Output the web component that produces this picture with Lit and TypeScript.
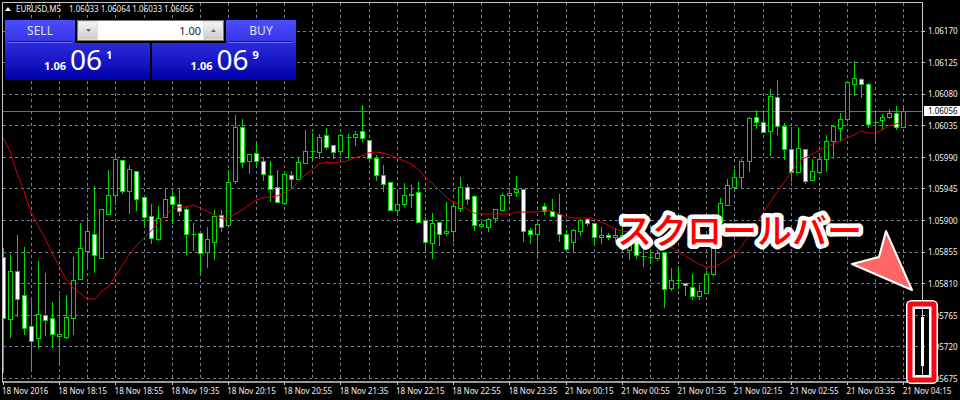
import { LitElement, html, svg, css } from "lit";
import { customElement, state } from "lit/decorators.js";

// Each candle: high, body top, body bottom, low, and f (falling) / r (rising)
const CANDLES = `
248 257 318 372 f|254 271 319 337 r|235 271 299 316 f|247 295 328 334 f|297 326 341 369 f|261 314 338 348 r|273 315 320 335 f|302 318 334 347 f
295 334 336 365 r|295 317 337 338 r|257 280 318 334 r|223 248 279 279 r|217 231 251 266 r|186 234 255 272 f|209 209 258 258 r|170 195 214 214 r
155 159 195 204 r|160 160 191 193 f|165 169 191 213 r|171 171 199 210 f|196 197 217 225 f|204 216 238 243 f|206 218 239 240 r|189 199 217 217 r
191 196 204 223 f|189 204 211 215 f|207 209 234 254 f|223 234 234 250 r|233 233 253 272 f|227 239 252 267 r|210 216 242 259 r|210 215 227 231 f
170 182 225 225 r|115 127 181 183 r|119 127 162 167 f|154 154 161 173 r|144 153 161 164 f|158 161 174 180 f|161 175 189 201 f|170 187 202 202 f
171 174 203 204 r|171 175 179 187 f|158 162 179 179 r|130 151 163 163 r|133 151 151 158 r|134 137 152 158 r|128 135 147 149 f|145 145 152 158 f
134 135 151 152 r|134 137 137 158 r|131 134 137 145 r|105 131 138 141 f|140 140 158 162 f|155 158 175 180 f|165 175 184 191 f|182 182 210 210 f
189 204 210 214 r|183 195 204 206 r|185 194 195 207 r|182 192 222 222 f|217 220 242 252 f|213 223 243 258 r|222 222 234 245 f|202 231 233 235 r
203 206 231 241 r|177 187 208 211 r|184 187 199 204 f|195 196 225 230 f|219 224 226 227 r|218 219 227 231 r|209 209 218 222 r|193 195 210 210 r
192 193 195 203 r|176 189 192 196 r|189 189 231 241 f|228 230 234 243 f|223 224 234 258 r|203 206 211 214 f|199 211 216 216 f|194 214 234 241 f
230 234 249 249 f|229 230 242 252 r|219 220 231 235 r|218 219 223 225 f|223 223 237 244 f|227 235 237 243 r|233 235 237 239 f|228 235 237 240 r
228 235 236 240 r|236 242 250 259 r|241 241 255 258 f|247 256 256 266 r|250 257 257 262 r|250 253 258 260 r|252 252 289 307 f|268 280 288 290 r
266 280 280 288 r|283 283 285 295 f|274 287 296 299 f|285 291 296 299 r|271 274 293 293 r|214 220 274 275 r|198 203 222 222 r|179 185 205 205 r
169 177 187 188 r|159 161 177 188 r|117 118 161 171 r|110 117 122 128 f|110 122 132 132 f|89 96 131 155 r|80 97 126 134 f|123 126 149 159 f
127 149 172 181 f|127 148 172 172 r|149 149 181 183 f|159 171 180 180 r|154 159 172 172 r|135 141 159 171 r|126 126 141 158 r|113 119 128 141 r
81 82 119 121 r|61 78 84 95 r|78 79 84 97 f|83 84 124 127 f|110 122 122 141 r|114 117 120 129 r|109 113 117 118 r|106 113 127 129 f|106 111 127 127 r`
  .trim()
  .split(/[|\n]/)
  .map((row) => {
    const [high, top, bottom, low, kind] = row.trim().split(" ");
    return { high: +high, top: +top, bottom: +bottom, low: +low, falling: kind === "f" };
  });

const AVERAGE =
  "3,138 10,151 17,173 24,191 31,212 38,226 45,238 52,253 59,266 66,279 73,288 80,293 87,299 95,299 102,291 109,286 115,277 122,266 129,255 137,245 144,238 151,231 158,223 165,215 172,210 179,207 186,207 193,205 200,208 207,211 214,215 221,218 228,219 235,214 242,210 249,205 256,200 263,198 270,197 277,196 284,193 291,189 298,182 305,175 312,170 319,164 326,162 333,163 340,162 347,161 354,158 361,156 368,153 375,152 383,153 390,155 397,158 404,161 411,164 418,169 425,177 432,183 439,190 446,197 453,202 460,205 467,209 474,213 481,214 510,214 517,212 538,212 545,210 552,211 559,214 566,217 573,218 592,218 601,222 608,225 615,229 622,231 629,232 643,235 657,241 671,247 685,256 699,264 706,267 713,267 720,264 734,255 742,246 748,237 757,223 765,210 775,195 785,181 795,167 800,161 808,156 820,150 833,144 840,141 847,138 854,135 861,131 868,133 875,133 882,130 889,126 896,124 903,121";

const PRICES = ["1.06170", "1.06125", "1.06080", "1.06035", "1.05990", "1.05945", "1.05900", "1.05855", "1.05810", "1.05765", "1.05720", "1.05675"];
const TIMES = [
  "18 Nov 2016", "18 Nov 18:15", "18 Nov 18:55", "18 Nov 19:35", "18 Nov 20:15", "18 Nov 20:55", "18 Nov 21:35", "18 Nov 22:15", "18 Nov 22:55",
  "18 Nov 23:35", "21 Nov 00:15", "21 Nov 00:55", "21 Nov 01:35", "21 Nov 02:15", "21 Nov 02:55", "21 Nov 03:35", "21 Nov 04:15",
];

const STEP = 7.035;
const candleX = (i: number) => Math.floor(3.3 + i * STEP) + 0.5;
const gridY = (i: number) => Math.floor(31.2 + i * 31.56) + 0.5;

@customElement("price-chart")
class PriceChart extends LitElement {
  static styles = css`
    :host { display: block; min-width: 0; min-height: 0; }
    svg { display: block; width: 100%; height: 100%; }
    .grid { stroke: #708090; stroke-dasharray: 3 3; }
    .level { stroke: #66727f; }
    .frame { stroke: #c8c8c8; fill: none; }
    .base { stroke: #999; stroke-width: 2; }
    .average { stroke: #d80000; fill: none; }
    .candle { stroke: #00d800; fill: #000; }
    .falling { fill: #fff; }
    .thumb { fill: #fff; }
  `;

  render() {
    return html`<svg viewBox="0 0 926 385" preserveAspectRatio="none" role="img" aria-label="EURUSD M5">
      ${Array.from({ length: 32 }, (_, i) => svg`<path class="grid" d="M${candleX(4 * (i + 1))} 3V382"/>`)}
      ${PRICES.map((_, i) => svg`<path class="grid" d="M3 ${gridY(i)}H922"/>`)}
      <path class="level" d="M3 111.5H922"/>
      ${CANDLES.map((c, i) => {
        const x = candleX(i);
        return svg`<g class="candle ${c.falling ? "falling" : ""}">
          <path d="M${x} ${c.high}V${c.low + 1}"/>
          ${c.bottom > c.top
            ? svg`<rect x=${x - 2} y=${c.top + 0.5} width="4" height=${c.bottom - c.top}/>`
            : svg`<path d="M${x - 2} ${c.top + 0.5}h5"/>`}
        </g>`;
      })}
      <polyline class="average" points=${AVERAGE}/>
      <rect x="0" y="240" width="2" height="140" fill="#000"/>
      <path class="frame" d="M2.5 382V2.5H922.5V382"/>
      <path class="base" d="M2 382H923"/>
      ${PRICES.map((_, i) => svg`<path class="frame" d="M922 ${gridY(i)}h3"/>`)}
      ${TIMES.map((_, i) => svg`<path class="frame" d="M${candleX(8 * i)} 382v3"/>`)}
      <rect class="thumb" x="921" y="317" width="3" height="49"/>
    </svg>`;
  }
}

@customElement("trade-panel")
class TradePanel extends LitElement {
  @state() volume = 1;

  static styles = css`
    :host {
      display: grid;
      grid-template-columns: 70px 1fr 70px;
      grid-template-rows: 23px 37px;
      width: 291px;
      background: #000;
      font-family: "Noto Sans", "Open Sans", sans-serif;
    }
    button, input { font: inherit; margin: 0; border: 0; padding: 0; border-radius: 0; min-width: 0; }
    .side { display: flex; flex-direction: column; color: #dfe0ff; font-size: 12px; line-height: 16px; background: linear-gradient(#4d4dff, #3434e4); padding: 0 3px; }
    .side span { flex: 1; display: flex; align-items: center; justify-content: center; align-self: stretch; border-bottom: 1px solid #1515a0; }
    .side::after { content: ""; height: 1px; align-self: stretch; background: #6a6af0; }
    .volume { display: grid; grid-template-columns: 20px 1fr 20px; margin: 0 2px 2px; border: 1px solid #777; background: #fff; }
    .step { display: grid; place-items: center; background: linear-gradient(#f4f4f4, #ccc); border: 1px solid #ddd; }
    .step svg { width: 5px; height: 3px; fill: #5068a8; }
    input { width: 100%; box-sizing: border-box; text-align: right; font-size: 11px; line-height: 16px; color: #222; padding-right: 2px; background: #fff; outline: none; }
    .prices { grid-column: 1 / -1; display: grid; grid-template-columns: 1fr 1fr; gap: 2px; }
    .price { display: flex; justify-content: center; align-items: baseline; color: #fff; background: linear-gradient(#2c2ce0, #0000a8); gap: 4px; padding-left: 2px; }
    .lead { font-size: 11px; font-weight: bold; }
    .pips { font-size: 28px; line-height: 32px; }
    .tick { font-size: 11px; font-weight: bold; align-self: flex-start; line-height: 24px; }
  `;

  private bump(by: number) {
    this.volume = Math.max(0.01, this.volume + by);
  }

  render() {
    return html`
      <button class="side"><span>SELL</span></button>
      <div class="volume">
        <button class="step" aria-label="Decrease volume" @click=${() => this.bump(-0.01)}><svg viewBox="0 0 5 3"><path d="M0 0h5L2.5 3z"/></svg></button>
        <input aria-label="Volume" .value=${this.volume.toFixed(2)} />
        <button class="step" aria-label="Increase volume" @click=${() => this.bump(0.01)}><svg viewBox="0 0 5 3"><path d="M0 3h5L2.5 0z"/></svg></button>
      </div>
      <button class="side"><span>BUY</span></button>
      <div class="prices">
        ${["1", "9"].map((tick) => html`<button class="price"><span class="lead">1.06</span><span class="pips">06</span><span class="tick">${tick}</span></button>`)}
      </div>`;
  }
}

@customElement("app-root")
class AppRoot extends LitElement {
  static styles = css`
    :host {
      position: relative;
      display: grid;
      grid-template-columns: 1fr 34px;
      grid-template-rows: 1fr 15px;
      height: 100vh;
      overflow: hidden;
      background: #000;
      color: #f0f0f0;
      font: 8px/12px "Noto Sans", "Open Sans", sans-serif;
      white-space: nowrap;
    }
    .prices { display: flex; flex-direction: column; justify-content: space-between; padding: 25px 0 0 2px; }
    .times { grid-column: 1 / -1; display: grid; grid-template-columns: repeat(17, 1fr); padding: 0 1px 0 2px; }
    .current { position: absolute; right: 0; top: 106px; width: 32px; padding-left: 4px; line-height: 10px; background: #fff; color: #000; }
    .title { position: absolute; left: 5px; top: 3px; display: flex; align-items: center; gap: 5px; }
    .title svg { width: 6px; height: 4px; fill: #fff; }
    .quote { padding-left: 3px; }
    .panel { position: absolute; left: 5px; top: 20px; }
    .callout { position: absolute; right: 90px; top: 200px; width: 260px; height: 60px; }
    .callout text {
      font: 500 35px "Noto Sans CJK JP", sans-serif;
      fill: #f00; stroke: #fff; stroke-width: 9px; paint-order: stroke; stroke-linejoin: round;
    }
    .arrow { position: absolute; right: 46px; top: 229px; width: 64px; height: 64px; fill: #ff6666; stroke: #fff; stroke-width: 2; stroke-linejoin: round; }
    .marker { position: absolute; right: 22px; top: 300px; width: 32px; height: 84px; fill: none; }
  `;

  render() {
    return html`
      <price-chart></price-chart>
      <div class="prices">${PRICES.map((p) => html`<span>${p}</span>`)}</div>
      <div class="times">${TIMES.map((t) => html`<span>${t}</span>`)}</div>
      <div class="current">1.06056</div>
      <div class="title">
        <svg viewBox="0 0 6 4"><path d="M0 4L3 0l3 4z"/></svg>
        <span>EURUSD,M5</span><span class="quote">1.06033 1.06064 1.06033 1.06056</span>
      </div>
      <trade-panel class="panel"></trade-panel>
      <svg class="arrow" viewBox="0 0 64 64"><path d="M36 2L62 61 2 35l27-7z"/></svg>
      <svg class="marker" viewBox="0 0 32 84">
        <rect x="4.5" y="4.5" width="23" height="75" rx="1" stroke="#fff" stroke-width="9"/>
        <rect x="4" y="4" width="24" height="76" rx="1" stroke="#f00a14" stroke-width="5"/>
      </svg>
      <svg class="callout" viewBox="0 0 260 60"><text x="7" y="44">スクロールバー</text></svg>`;
  }
}
